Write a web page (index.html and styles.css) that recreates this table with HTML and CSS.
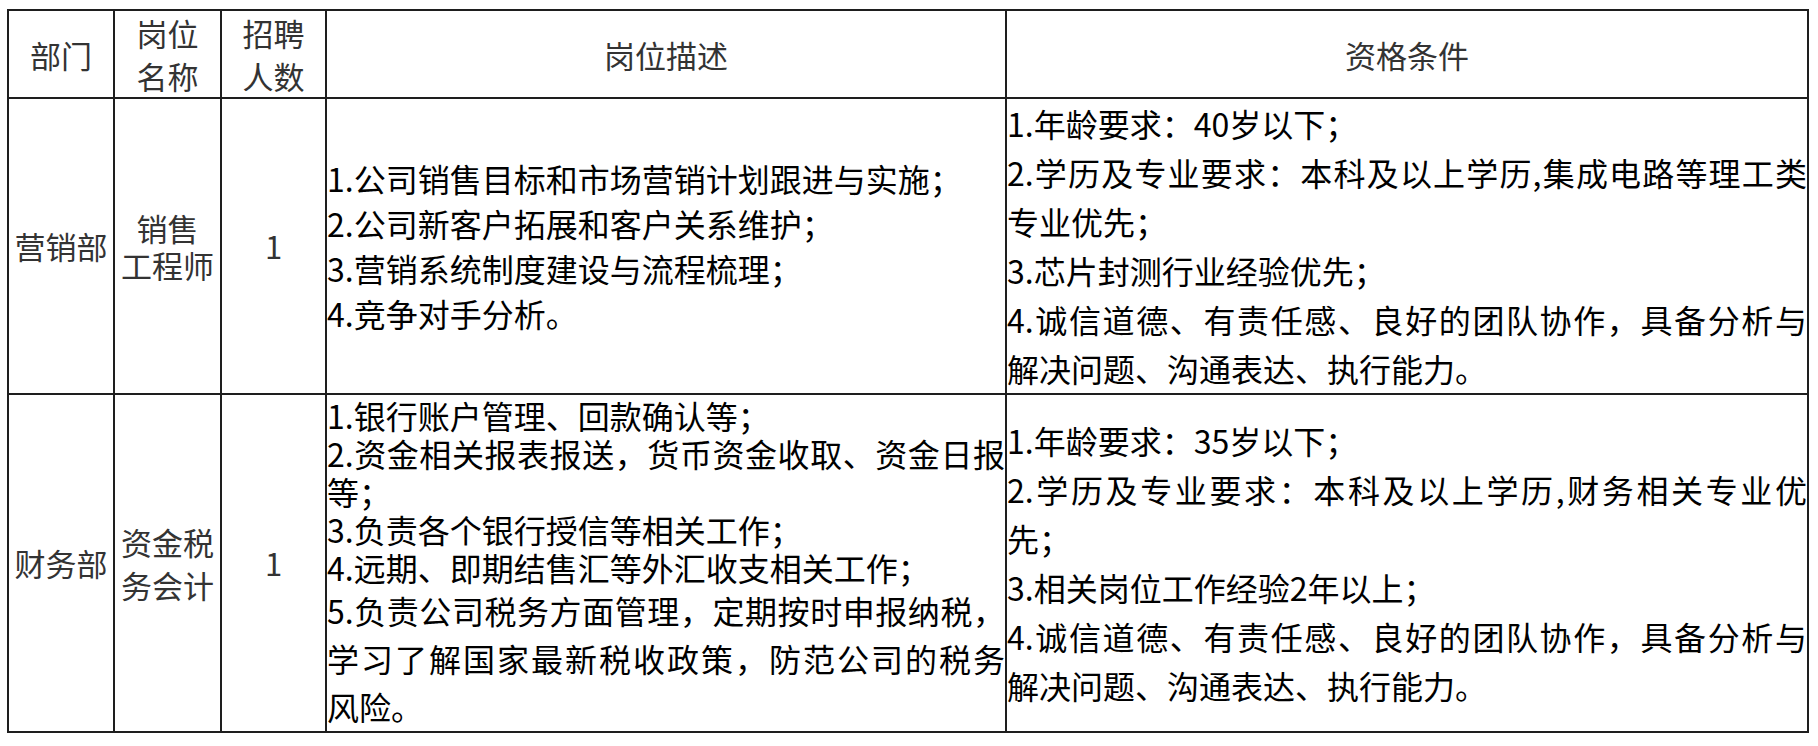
FILE: index.html
```html
<!DOCTYPE html>
<html lang="zh-CN">
<head>
<meta charset="utf-8">
<title>招聘岗位</title>
<link rel="stylesheet" href="styles.css">
</head>
<body>
<table class="jobs">
  <colgroup>
    <col class="c-dept">
    <col class="c-title">
    <col class="c-num">
    <col class="c-desc">
    <col class="c-req">
  </colgroup>
  <thead>
    <tr class="r-head">
      <th class="h-one">部门</th>
      <th class="h-two"><div class="ln">岗位</div><div class="ln">名称</div></th>
      <th class="h-two"><div class="ln">招聘</div><div class="ln">人数</div></th>
      <th class="h-one">岗位描述</th>
      <th class="h-one">资格条件</th>
    </tr>
  </thead>
  <tbody>
    <tr class="r-sales">
      <td class="dept">营销部</td>
      <td class="title t-sales"><div class="ln">销售</div><div class="ln">工程师</div></td>
      <td class="num">1</td>
      <td class="text desc-sales">
        <div class="ln">1.公司销售目标和市场营销计划跟进与实施；</div>
        <div class="ln">2.公司新客户拓展和客户关系维护；</div>
        <div class="ln">3.营销系统制度建设与流程梳理；</div>
        <div class="ln">4.竞争对手分析。</div>
      </td>
      <td class="text req req-sales">
        <div class="ln">1.年龄要求：40岁以下；</div>
        <div class="ln j">2.学历及专业要求：本科及以上学历,集成电路等理工类</div>
        <div class="ln">专业优先；</div>
        <div class="ln">3.芯片封测行业经验优先；</div>
        <div class="ln j">4.诚信道德、有责任感、良好的团队协作，具备分析与</div>
        <div class="ln">解决问题、沟通表达、执行能力。</div>
      </td>
    </tr>
    <tr class="r-fin">
      <td class="dept">财务部</td>
      <td class="title t-fin"><div class="ln">资金税</div><div class="ln">务会计</div></td>
      <td class="num">1</td>
      <td class="text desc-fin">
        <div class="ln">1.银行账户管理、回款确认等；</div>
        <div class="ln j">2.资金相关报表报送，货币资金收取、资金日报</div>
        <div class="ln">等；</div>
        <div class="ln">3.负责各个银行授信等相关工作；</div>
        <div class="ln">4.远期、即期结售汇等外汇收支相关工作；</div>
        <div class="para-wide">
          <div class="ln j">5.负责公司税务方面管理，定期按时申报纳税，</div>
          <div class="ln j">学习了解国家最新税收政策，防范公司的税务</div>
          <div class="ln">风险。</div>
        </div>
      </td>
      <td class="text req req-fin">
        <div class="ln">1.年龄要求：35岁以下；</div>
        <div class="ln j">2.学历及专业要求：本科及以上学历,财务相关专业优</div>
        <div class="ln">先；</div>
        <div class="ln">3.相关岗位工作经验2年以上；</div>
        <div class="ln j">4.诚信道德、有责任感、良好的团队协作，具备分析与</div>
        <div class="ln">解决问题、沟通表达、执行能力。</div>
      </td>
    </tr>
  </tbody>
</table>
</body>
</html>
```
FILE: styles.css
```css
html, body {
  background: #ffffff;
}

body {
  margin: 9px 0 0 7px;
  font-family: "Noto Sans CJK SC", "Noto Sans", sans-serif;
  font-size: 31px;
  color: #000000;
}

.jobs {
  border-collapse: collapse;
  table-layout: fixed;
  width: 1800px;
}

.c-dept { width: 106px; }
.c-title { width: 107px; }
.c-num { width: 105px; }
.c-desc { width: 680px; }
.c-req { width: 802px; }

.jobs th,
.jobs td {
  border: 2px solid #1e1e1e;
  padding: 0;
  vertical-align: middle;
}

.jobs th {
  font-weight: normal;
  color: #333333;
  text-align: center;
  line-height: 43px;
}

.r-head th { height: 85px; }
.r-sales td { height: 294px; }
.r-fin td { height: 336px; }

.dept,
.num,
.title {
  text-align: center;
  color: #333333;
}

.dept, .num { line-height: 40px; }

.t-sales { line-height: 37px; }
.t-fin { line-height: 43px; }

.text {
  padding-left: 1px;
  padding-right: 1px;
  text-align: left;
  font-size: 32px;
}

.ln {
  white-space: nowrap;
}

.ln.j {
  text-align: justify;
  text-align-last: justify;
}

.desc-sales { line-height: 45px; }
.desc-fin { line-height: 38px; }
.desc-fin .para-wide { line-height: 48px; }

.req-sales { line-height: 49px; }
.req-fin { line-height: 49px; }
```
